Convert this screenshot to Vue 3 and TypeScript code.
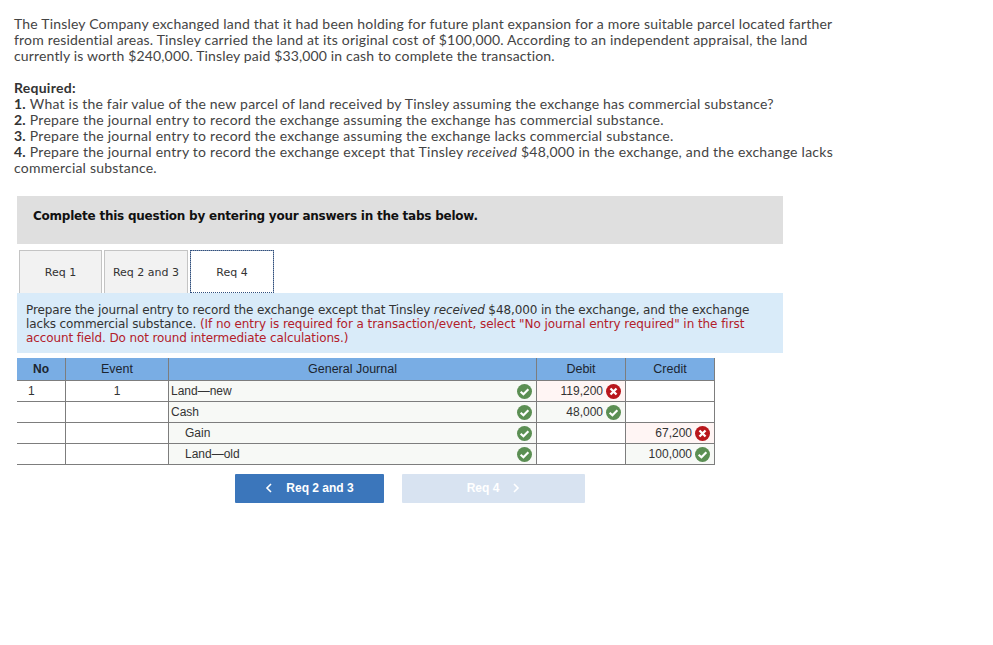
<script setup lang="ts">
type Mark = 'ok' | 'bad' | ''

interface Row {
  no: string
  event: string
  account: string
  indent: boolean
  debit: string
  debitMark: Mark
  credit: string
  creditMark: Mark
}

const rows: Row[] = [
  { no: '1', event: '1', account: 'Land—new', indent: false, debit: '119,200', debitMark: 'bad', credit: '', creditMark: '' },
  { no: '', event: '', account: 'Cash', indent: false, debit: '48,000', debitMark: 'ok', credit: '', creditMark: '' },
  { no: '', event: '', account: 'Gain', indent: true, debit: '', debitMark: '', credit: '67,200', creditMark: 'bad' },
  { no: '', event: '', account: 'Land—old', indent: true, debit: '', debitMark: '', credit: '100,000', creditMark: 'ok' },
]

const tabs = ['Req 1', 'Req 2 and 3', 'Req 4']
</script>

<template>
  <div class="page">
    <section class="question">
      <p class="intro">
        The Tinsley Company exchanged land that it had been holding for future plant expansion for a more suitable parcel located farther<br />
        from residential areas. Tinsley carried the land at its original cost of $100,000. According to an independent appraisal, the land<br />
        <span class="tight">currently is worth $240,000. Tinsley paid $33,000 in cash to complete the transaction.</span>
      </p>
      <p class="required">
        <b>Required:</b><br />
        <b>1.</b> <span class="first">What is the fair value of the new parcel of land received by Tinsley assuming the exchange has commercial substance?</span><br />
        <b>2.</b> Prepare the journal entry to record the exchange assuming the exchange has commercial substance.<br />
        <b>3.</b> Prepare the journal entry to record the exchange assuming the exchange lacks commercial substance.<br />
        <b>4.</b> Prepare the journal entry to record the exchange except that Tinsley <i>received</i> $48,000 in the exchange, and the exchange lacks<br />
        <span class="first">commercial substance.</span>
      </p>
    </section>

    <div class="banner">Complete this question by entering your answers in the tabs below.</div>

    <div class="tabs">
      <div v-for="(tab, i) in tabs" :key="tab" class="tab" :class="{ active: i === 2 }">{{ tab }}</div>
    </div>

    <div class="instructions">
      Prepare the journal entry to record the exchange except that Tinsley <i>received</i> $48,000 in the exchange, and the exchange<br />
      lacks commercial substance. <span class="red wide">(If no entry is required for a transaction/event, select "No journal entry required" in the first</span><br />
      <span class="red">account field. Do not round intermediate calculations.)</span>
    </div>

    <table class="journal">
      <colgroup>
        <col style="width: 49px" />
        <col style="width: 103px" />
        <col style="width: 368px" />
        <col style="width: 89px" />
        <col style="width: 89px" />
      </colgroup>
      <thead>
        <tr>
          <th>No</th>
          <th>Event</th>
          <th>General Journal</th>
          <th>Debit</th>
          <th>Credit</th>
        </tr>
      </thead>
      <tbody>
        <tr v-for="(row, i) in rows" :key="i">
          <td class="no">{{ row.no }}</td>
          <td class="event">{{ row.event }}</td>
          <td class="account">
            <div class="account-cell">
              <span :class="{ indent: row.indent }">{{ row.account }}</span>
              <svg class="mark" viewBox="0 0 14 14">
                <circle cx="7" cy="7" r="7" fill="#5b8f53" />
                <path d="M3.4 7.2 6 9.6 10.6 4.9" fill="none" stroke="#fff" stroke-width="2" />
              </svg>
            </div>
          </td>
          <td class="amount" :class="row.debitMark">
            <div class="amount-cell" v-if="row.debit">
              {{ row.debit }}
              <svg class="mark" viewBox="0 0 14 14">
                <template v-if="row.debitMark === 'ok'">
                  <circle cx="7" cy="7" r="7" fill="#5b8f53" />
                  <path d="M3.4 7.2 6 9.6 10.6 4.9" fill="none" stroke="#fff" stroke-width="2" />
                </template>
                <template v-else>
                  <circle cx="7" cy="7" r="7" fill="#b9161c" />
                  <path d="M4.2 4.2 9.8 9.8M9.8 4.2 4.2 9.8" fill="none" stroke="#fff" stroke-width="2.2" />
                </template>
              </svg>
            </div>
          </td>
          <td class="amount" :class="row.creditMark">
            <div class="amount-cell" v-if="row.credit">
              {{ row.credit }}
              <svg class="mark" viewBox="0 0 14 14">
                <template v-if="row.creditMark === 'ok'">
                  <circle cx="7" cy="7" r="7" fill="#5b8f53" />
                  <path d="M3.4 7.2 6 9.6 10.6 4.9" fill="none" stroke="#fff" stroke-width="2" />
                </template>
                <template v-else>
                  <circle cx="7" cy="7" r="7" fill="#b9161c" />
                  <path d="M4.2 4.2 9.8 9.8M9.8 4.2 4.2 9.8" fill="none" stroke="#fff" stroke-width="2.2" />
                </template>
              </svg>
            </div>
          </td>
        </tr>
      </tbody>
    </table>

    <div class="nav">
      <button class="nav-btn prev">
        <svg width="8" height="10" viewBox="0 0 8 10"><path d="M6 1 2 5l4 4" fill="none" stroke="#fff" stroke-width="1.6" /></svg>
        Req 2 and 3
      </button>
      <button class="nav-btn next">
        Req 4
        <svg width="8" height="10" viewBox="0 0 8 10"><path d="M2 1l4 4-4 4" fill="none" stroke="#fff" stroke-width="1.6" /></svg>
      </button>
    </div>
  </div>
</template>

<style scoped>
.page {
  width: 993px;
  height: 645px;
  overflow: hidden;
  box-sizing: border-box;
  padding-top: 16px;
  background: #fff;
}
.question {
  padding-left: 14px;
  font-family: Lato, sans-serif;
  font-size: 14px;
  letter-spacing: 0.185px;
  line-height: 16px;
  color: #444;
  white-space: nowrap;
}
.question p {
  margin: 0;
}
.question b {
  color: #333;
}
.tight {
  letter-spacing: 0.15px;
}
.required {
  padding-top: 16px;
  letter-spacing: 0.255px;
}
.required .first {
  letter-spacing: 0.21px;
}
.banner {
  margin: 20px 0 0 17px;
  width: 766px;
  height: 48px;
  box-sizing: border-box;
  padding-left: 16px;
  background: #dfdfdf;
  color: #111;
  font-family: "DejaVu Sans", sans-serif;
  font-size: 12px;
  letter-spacing: -0.23px;
  font-weight: 700;
  line-height: 40px;
  white-space: nowrap;
}
.tabs {
  display: flex;
  gap: 2px;
  margin: 6px 0 0 19px;
  height: 43px;
}
.tab {
  box-sizing: border-box;
  width: 83px;
  border: 1px solid #c4c4c4;
  border-bottom: 0;
  background: #f2f2f2;
  color: #333;
  font-family: "DejaVu Sans", sans-serif;
  font-size: 11px;
  line-height: 44px;
  text-align: center;
}
.tab:nth-child(2),
.tab.active {
  width: 84px;
}
.tab.active {
  background: #fff;
  outline: 1px dotted #2f4f7f;
  outline-offset: -1px;
  border-color: #8a9ab0;
}
.instructions {
  margin-left: 17px;
  width: 766px;
  height: 60px;
  box-sizing: border-box;
  padding: 10px 0 0 9px;
  background: #d9ebf9;
  color: #333;
  font-family: "DejaVu Sans", sans-serif;
  font-size: 12px;
  letter-spacing: -0.115px;
  line-height: 14px;
  white-space: nowrap;
}
.red {
  color: #b3202a;
}
.wide {
  letter-spacing: -0.06px;
}
.journal {
  margin: 5px 0 0 17px;
  width: 698px;
  table-layout: fixed;
  border-collapse: separate;
  border-spacing: 0;
  font-family: "Liberation Sans", sans-serif;
  font-size: 12px;
  color: #333;
}
.journal th {
  box-sizing: border-box;
  height: 23px;
  padding: 0 0 1px;
  background: #79ade4;
  border-right: 1px solid #7d7d7d;
  border-bottom: 1px solid #7d7d7d;
  color: #1c2530;
  font-size: 12.5px;
  font-weight: 400;
  text-align: center;
}
.journal th:first-child {
  font-size: 12px;
  font-weight: 700;
}
.journal td {
  box-sizing: border-box;
  height: 21px;
  padding: 0;
  border-right: 1px solid #7d7d7d;
  border-bottom: 1px solid #7d7d7d;
}
.no {
  padding-left: 11px !important;
}
.event {
  text-align: center;
}
.account {
  background: #f7f9f6;
  padding: 0 4px 0 2px !important;
}
.account-cell {
  display: flex;
  align-items: center;
  justify-content: space-between;
}
.indent {
  padding-left: 14px;
}
.amount {
  padding: 0 4px 0 0 !important;
}
.amount.ok {
  background: #f7f9f6;
}
.amount.bad {
  background: #fff5f4;
}
.amount-cell {
  display: flex;
  align-items: center;
  justify-content: flex-end;
  gap: 3px;
}
.mark {
  display: block;
  width: 15px;
  height: 15px;
  flex: none;
}
.nav {
  display: flex;
  gap: 18px;
  margin: 9px 0 0 235px;
}
.nav-btn {
  display: flex;
  align-items: center;
  justify-content: center;
  gap: 13px;
  height: 29px;
  padding: 0 0 1px;
  border: 0;
  border-radius: 1px;
  color: #fff;
  font-family: "Liberation Sans", sans-serif;
  font-size: 12px;
  font-weight: 700;
}
.prev {
  width: 149px;
  background: #3b76bb;
}
.next {
  width: 183px;
  background: #d8e3f1;
}
</style>
